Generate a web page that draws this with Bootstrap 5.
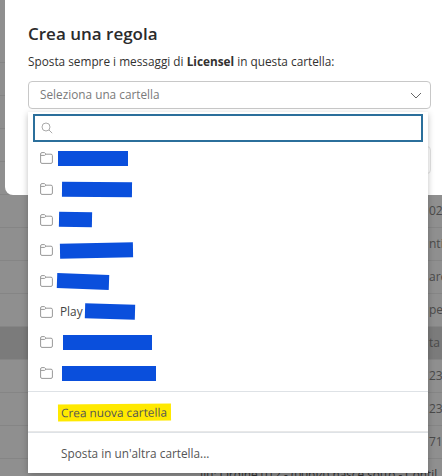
<!DOCTYPE html>
<html>
  <head>
    <title>Crea una regola</title>
    <link href="https://cdn.jsdelivr.net/npm/bootstrap@5.3.3/dist/css/bootstrap.min.css" rel="stylesheet" />
    <style>
      html, body { height: 476px; overflow: hidden; }
      body { background: #8f8f8f; font-family: "Open Sans", "Liberation Sans", sans-serif; font-size: 11.8px; color: #323130; }
      .stage { position: relative; width: 442px; height: 476px; overflow: hidden; }

      /* mail rows behind the backdrop */
      .mail-row { height: 33px; border-bottom: 1px solid #858585; color: #4a4a4a; font-size: 12px; line-height: 32px; white-space: nowrap; padding-left: 429px; }
      .mail-spacer { height: 30px; }
      .mail-dark { background: #7b7b7b; }
      .mail-foot { color: #333; padding-left: 200px; line-height: 12px; margin-top: 9px; white-space: nowrap; }

      .rule-box { position: absolute; left: 5px; top: -10px; width: 460px; height: 205px; background: #fff; border-radius: 8px; padding: 32px 0 0 23px; }
      .rule-title { font-size: 17px; font-weight: 600; line-height: 24px; margin: 0 0 7px; color: #2b2b2b; }
      .rule-text { line-height: 17px; margin-bottom: 11px; }
      .folder-pick { width: 403px; height: 28px; border: 1px solid #c8c8c8; border-radius: 4px; padding: 0 8px 0 11px; color: #7a7a7a; }
      .ghost-field { width: 403px; height: 28px; border: 1px solid #e4e4e4; border-radius: 4px; margin-top: 37px; }

      .folder-menu { position: absolute; left: 28px; top: 112px; width: 400px; height: 361px; background: #fff; border-radius: 0 0 4px 4px; box-shadow: 0 2px 6px rgba(0, 0, 0, .25); padding-top: 2px; }
      .folder-search { height: 28px; margin: 0 5px; border: 2px solid #2b6f9b; padding-left: 6px; }
      .folder-row { height: 30.7px; padding: 0 0 0 12px; border: 0; color: #444; }
      .folder-row svg { flex: none; }
      .action-row { height: 41px; padding: 2px 0 0 33px; color: #555; border-color: #e8e8e8; }
      .folder-rows { margin-top: 1px; height: 248px; }
      .hide-blue { display: block; height: 15px; background: #0a4fdc; flex: none; }
      .b1 { width: 70px; margin-left: 5px; }
      .b2 { width: 70px; margin-left: 9px; transform: rotate(.4deg); }
      .b3 { width: 33px; margin-left: 6px; transform: rotate(1deg); }
      .b4 { width: 73px; margin-left: 7px; transform: rotate(-1deg); }
      .b5 { width: 52px; margin-left: 4px; transform: rotate(2deg); }
      .b6 { width: 50px; margin-left: 2px; transform: rotate(1.5deg); }
      .b7 { width: 89px; margin-left: 10px; }
      .b8 { width: 94px; margin-left: 9px; }
      .play-name { margin-left: 7px; }
      .marker { background: #ffe900; padding: 2px 4px 2px 3px; margin-left: -3px; transform: rotate(-.4deg); display: inline-block; line-height: 13px; }
    </style>
  </head>
  <body>
    <div class="stage">
      <!-- page behind the dialog -->
      <div class="mail-spacer"></div>
      <div class="mail-row"></div>
      <div class="mail-row"></div>
      <div class="mail-row"></div>
      <div class="mail-row"></div>
      <div class="mail-row"></div>
      <div class="mail-row"><span>02</span></div>
      <div class="mail-row"><span>nti</span></div>
      <div class="mail-row"><span>are</span></div>
      <div class="mail-row"><span>pel</span></div>
      <div class="mail-row mail-dark"><span>ta</span></div>
      <div class="mail-row"><span>23</span></div>
      <div class="mail-row"><span>23</span></div>
      <div class="mail-row"><span>71</span></div>
      <div class="mail-foot">Ilu: Ordine 012 - (00bf4) nasce sotto - Contil</div>

      <!-- dialog -->
      <div class="rule-box">
        <h1 class="rule-title">Crea una regola</h1>
        <p class="rule-text">Sposta sempre i messaggi di <b>Licensel</b> in questa cartella:</p>
        <div class="folder-pick d-flex align-items-center justify-content-between">
          <span>Seleziona una cartella</span>
          <svg width="12" height="7" viewBox="0 0 12 7" fill="none" stroke="#666" stroke-width="1"><path d="M1 1l5 5 5-5" /></svg>
        </div>
        <div class="ghost-field"></div>
      </div>

      <!-- folder dropdown -->
      <div class="folder-menu">
        <div class="folder-search d-flex align-items-center">
          <svg width="12" height="12" viewBox="0 0 12 12" fill="none" stroke="#aaa" stroke-width="1"><circle cx="5" cy="5" r="4" /><path d="M8 8l3.2 3.2" /></svg>
        </div>
        <div class="list-group list-group-flush rounded-0">
          <div class="folder-rows">
            <div class="list-group-item folder-row d-flex align-items-center">
              <svg width="13" height="12" viewBox="0 0 13 12" fill="none" stroke="#999" stroke-width="1"><path d="M.6 10V2q0-1.4 1.4-1.4h2.4l1.6 1.6h5q1.4 0 1.4 1.4V10q0 1.4-1.4 1.4H2Q.6 11.4.6 10zM.6 3.4h4l1.4-1.2" /></svg>
              <span class="hide-blue b1"></span>
            </div>
            <div class="list-group-item folder-row d-flex align-items-center">
              <svg width="13" height="12" viewBox="0 0 13 12" fill="none" stroke="#999" stroke-width="1"><path d="M.6 10V2q0-1.4 1.4-1.4h2.4l1.6 1.6h5q1.4 0 1.4 1.4V10q0 1.4-1.4 1.4H2Q.6 11.4.6 10zM.6 3.4h4l1.4-1.2" /></svg>
              <span class="hide-blue b2"></span>
            </div>
            <div class="list-group-item folder-row d-flex align-items-center">
              <svg width="13" height="12" viewBox="0 0 13 12" fill="none" stroke="#999" stroke-width="1"><path d="M.6 10V2q0-1.4 1.4-1.4h2.4l1.6 1.6h5q1.4 0 1.4 1.4V10q0 1.4-1.4 1.4H2Q.6 11.4.6 10zM.6 3.4h4l1.4-1.2" /></svg>
              <span class="hide-blue b3"></span>
            </div>
            <div class="list-group-item folder-row d-flex align-items-center">
              <svg width="13" height="12" viewBox="0 0 13 12" fill="none" stroke="#999" stroke-width="1"><path d="M.6 10V2q0-1.4 1.4-1.4h2.4l1.6 1.6h5q1.4 0 1.4 1.4V10q0 1.4-1.4 1.4H2Q.6 11.4.6 10zM.6 3.4h4l1.4-1.2" /></svg>
              <span class="hide-blue b4"></span>
            </div>
            <div class="list-group-item folder-row d-flex align-items-center">
              <svg width="13" height="12" viewBox="0 0 13 12" fill="none" stroke="#999" stroke-width="1"><path d="M.6 10V2q0-1.4 1.4-1.4h2.4l1.6 1.6h5q1.4 0 1.4 1.4V10q0 1.4-1.4 1.4H2Q.6 11.4.6 10zM.6 3.4h4l1.4-1.2" /></svg>
              <span class="hide-blue b5"></span>
            </div>
            <div class="list-group-item folder-row d-flex align-items-center">
              <svg width="13" height="12" viewBox="0 0 13 12" fill="none" stroke="#999" stroke-width="1"><path d="M.6 10V2q0-1.4 1.4-1.4h2.4l1.6 1.6h5q1.4 0 1.4 1.4V10q0 1.4-1.4 1.4H2Q.6 11.4.6 10zM.6 3.4h4l1.4-1.2" /></svg>
              <span class="play-name">Play</span>
              <span class="hide-blue b6"></span>
            </div>
            <div class="list-group-item folder-row d-flex align-items-center">
              <svg width="13" height="12" viewBox="0 0 13 12" fill="none" stroke="#999" stroke-width="1"><path d="M.6 10V2q0-1.4 1.4-1.4h2.4l1.6 1.6h5q1.4 0 1.4 1.4V10q0 1.4-1.4 1.4H2Q.6 11.4.6 10zM.6 3.4h4l1.4-1.2" /></svg>
              <span class="hide-blue b7"></span>
            </div>
            <div class="list-group-item folder-row d-flex align-items-center">
              <svg width="13" height="12" viewBox="0 0 13 12" fill="none" stroke="#999" stroke-width="1"><path d="M.6 10V2q0-1.4 1.4-1.4h2.4l1.6 1.6h5q1.4 0 1.4 1.4V10q0 1.4-1.4 1.4H2Q.6 11.4.6 10zM.6 3.4h4l1.4-1.2" /></svg>
              <span class="hide-blue b8"></span>
            </div>
          </div>
          <div class="list-group-item action-row d-flex align-items-center border-top"><span class="marker">Crea nuova cartella</span></div>
          <div class="list-group-item action-row d-flex align-items-center border-top">Sposta in un'altra cartella...</div>
        </div>
      </div>
    </div>
    <script src="https://cdn.jsdelivr.net/npm/bootstrap@5.3.3/dist/js/bootstrap.bundle.min.js"></script>
  </body>
</html>
